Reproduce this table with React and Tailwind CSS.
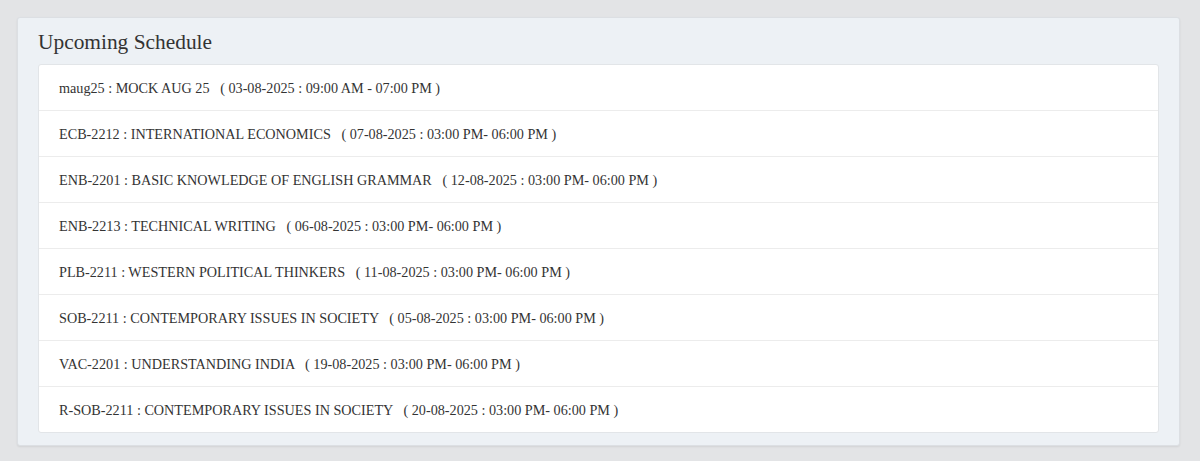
const schedule = [
  { code: 'maug25', title: 'MOCK AUG 25', time: '03-08-2025 : 09:00 AM - 07:00 PM' },
  { code: 'ECB-2212', title: 'INTERNATIONAL ECONOMICS', time: '07-08-2025 : 03:00 PM- 06:00 PM' },
  { code: 'ENB-2201', title: 'BASIC KNOWLEDGE OF ENGLISH GRAMMAR', time: '12-08-2025 : 03:00 PM- 06:00 PM' },
  { code: 'ENB-2213', title: 'TECHNICAL WRITING', time: '06-08-2025 : 03:00 PM- 06:00 PM' },
  { code: 'PLB-2211', title: 'WESTERN POLITICAL THINKERS', time: '11-08-2025 : 03:00 PM- 06:00 PM' },
  { code: 'SOB-2211', title: 'CONTEMPORARY ISSUES IN SOCIETY', time: '05-08-2025 : 03:00 PM- 06:00 PM' },
  { code: 'VAC-2201', title: 'UNDERSTANDING INDIA', time: '19-08-2025 : 03:00 PM- 06:00 PM' },
  { code: 'R-SOB-2211', title: 'CONTEMPORARY ISSUES IN SOCIETY', time: '20-08-2025 : 03:00 PM- 06:00 PM' },
];

export default function App() {
  return (
    <div className="min-h-[461px] bg-[#e3e4e6] pt-[17px] pl-[17px] pr-[20px] font-['Liberation_Serif',serif] text-[#333]">
      <section className="rounded-[3px] border border-[#dcdfe3] bg-[#edf1f5] px-[20px] pb-[12px] shadow-[0_1px_2px_rgba(0,0,0,0.08)]">
        <h2 className="pt-[13px] pb-[11px] text-[21.4px] leading-[22px] text-[#333]">Upcoming Schedule</h2>
        <ul className="rounded-[3px] border border-[#e2e5e8] bg-white">
          {schedule.map((s, i) => (
            <li
              key={s.code + i}
              className="border-b border-[#ececec] px-[20px] pt-[13px] pb-[11px] text-[14.2px] leading-[21px] whitespace-pre last:border-b-0"
            >
              {`${s.code} : ${s.title}   ( ${s.time} )`}
            </li>
          ))}
        </ul>
      </section>
    </div>
  );
}
